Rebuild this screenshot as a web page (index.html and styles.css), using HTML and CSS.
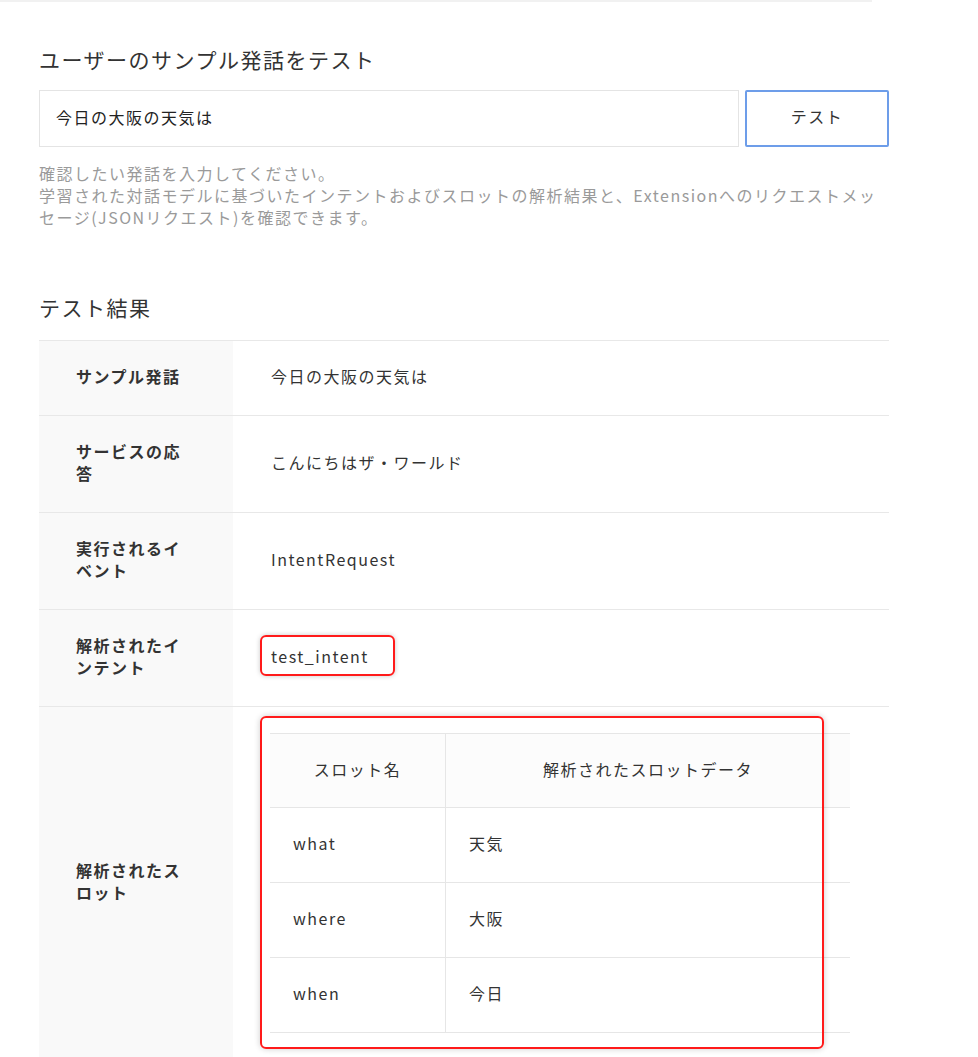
FILE: index.html
```html
<!DOCTYPE html>
<html lang="ja">
<head>
<meta charset="utf-8">
<title>ユーザーのサンプル発話をテスト</title>
<link rel="stylesheet" href="styles.css">
</head>
<body>
<div class="topline"></div>
<main class="page">
  <h2 class="heading">ユーザーのサンプル発話をテスト</h2>
  <div class="test-row">
    <input class="utter-input" type="text" value="今日の大阪の天気は">
    <button class="test-btn" type="button">テスト</button>
  </div>
  <p class="help">確認したい発話を入力してください。<br>学習された対話モデルに基づいたインテントおよびスロットの解析結果と、Extensionへのリクエストメッセージ(JSONリクエスト)を確認できます。</p>

  <h2 class="heading result-heading">テスト結果</h2>
  <table class="result">
    <tbody>
      <tr>
        <th class="label">サンプル発話</th>
        <td class="value">今日の大阪の天気は</td>
      </tr>
      <tr>
        <th class="label">サービスの応答</th>
        <td class="value">こんにちはザ・ワールド</td>
      </tr>
      <tr>
        <th class="label">実行されるイベント</th>
        <td class="value">IntentRequest</td>
      </tr>
      <tr>
        <th class="label">解析されたインテント</th>
        <td class="value"><span class="mark-intent">test_intent</span></td>
      </tr>
      <tr>
        <th class="label">解析されたスロット</th>
        <td class="value slots-cell">
          <div class="slots-wrap">
            <table class="slots">
              <thead>
                <tr>
                  <th class="slot-name-h">スロット名</th>
                  <th class="slot-data-h">解析されたスロットデータ</th>
                </tr>
              </thead>
              <tbody>
                <tr><td>what</td><td>天気</td></tr>
                <tr><td>where</td><td>大阪</td></tr>
                <tr><td>when</td><td>今日</td></tr>
              </tbody>
            </table>
          </div>
        </td>
      </tr>
    </tbody>
  </table>
</main>
</body>
</html>
```

FILE: styles.css
```css
html, body {
  margin: 0;
  padding: 0;
  background: #ffffff;
}

body {
  font-family: "Noto Sans CJK JP", "Noto Sans", sans-serif;
  font-size: 16px;
  color: #333333;
  letter-spacing: 1.5px;
}

.topline {
  width: 872px;
  height: 2px;
  background: #f1f1f1;
}

.page {
  width: 850px;
  padding-left: 39px;
}

.heading {
  margin: 42px 0 0 0;
  padding-bottom: 2px;
  font-size: 21px;
  line-height: 30px;
  font-weight: 400;
  color: #333333;
}

.test-row {
  display: flex;
  gap: 6px;
  margin-top: 14px;
}

.utter-input {
  box-sizing: border-box;
  width: 700px;
  height: 57px;
  border: 1px solid #e4e4e4;
  padding: 0 0 3px 16px;
  margin: 0;
  font-family: inherit;
  font-size: 16px;
  letter-spacing: 1.5px;
  color: #222222;
  background: #ffffff;
  outline: none;
}

.test-btn {
  box-sizing: border-box;
  width: 144px;
  height: 57px;
  border: 2px solid #6d9de9;
  border-radius: 2px;
  background: #ffffff;
  margin: 0;
  padding: 0 0 5px 0;
  font-family: inherit;
  font-size: 16px;
  letter-spacing: 1.5px;
  color: #333333;
}

.help {
  margin: 15px 0 0 0;
  line-height: 22px;
  color: #9a9a9a;
}

.result-heading {
  margin-top: 64px;
}

.result {
  width: 850px;
  margin-top: 16px;
  border-collapse: collapse;
}

.result > tbody > tr {
  border-top: 1px solid #e8e8e8;
}

.label {
  width: 112px;
  padding: 24px 45px 28px 37px;
  background: #f9f9f9;
  text-align: left;
  font-weight: 700;
  line-height: 22px;
  vertical-align: middle;
}

.value {
  padding: 24px 37px 28px 38px;
  line-height: 22px;
  vertical-align: middle;
  background: #ffffff;
}

.mark-intent {
  position: relative;
  display: inline-block;
  line-height: 22px;
}

.mark-intent::after {
  content: "";
  position: absolute;
  left: -11px;
  top: -10px;
  width: 135px;
  height: 41px;
  box-sizing: border-box;
  border: 2px solid #ff1a1a;
  border-radius: 6px;
  box-shadow: 0 0 5px rgba(0, 0, 0, 0.22);
}

.slots-cell {
  padding: 26px 39px 26px 37px;
}

.slots-wrap {
  position: relative;
}

.slots-wrap::after {
  content: "";
  position: absolute;
  left: -10px;
  top: -17px;
  width: 564px;
  height: 333px;
  box-sizing: border-box;
  border: 2px solid #ff1a1a;
  border-radius: 6px;
  box-shadow: 0 0 6px rgba(0, 0, 0, 0.2);
}

.slots {
  width: 580px;
  border-collapse: collapse;
  border-top: 1px solid #e6e6e6;
}

.slots th,
.slots td {
  border-bottom: 1px solid #e6e6e6;
  line-height: 22px;
  text-align: left;
  font-weight: 400;
}

.slots th {
  padding: 24px 24px 27px 24px;
  background: #fcfcfc;
  text-align: center;
}

.slots td {
  padding: 24px 24px 28px 23px;
}

.slot-name-h {
  width: 127px;
}

.slots th + th,
.slots td + td {
  border-left: 1px solid #e6e6e6;
}
```
